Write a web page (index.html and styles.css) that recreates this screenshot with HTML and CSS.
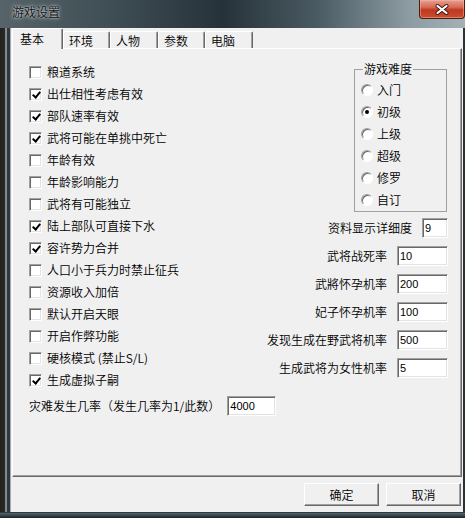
FILE: index.html
```html
<!DOCTYPE html>
<html lang="zh-CN">
<head>
    <meta charset="UTF-8">
    <title>游戏设置</title>
    <link rel="stylesheet" href="styles.css">
</head>
<body>
    <div class="window">
        <div class="title-bar">
            <span class="title">游戏设置</span>
            <button class="close-btn">
                <svg width="14" height="11" viewBox="0 0 14 11">
                    <path d="M2.5 2 L11.5 9 M11.5 2 L2.5 9" stroke="#3b1710" stroke-width="4" stroke-linecap="round"/>
                    <path d="M2.5 2 L11.5 9 M11.5 2 L2.5 9" stroke="#fff" stroke-width="2.2" stroke-linecap="round"/>
                </svg>
            </button>
        </div>

        <div class="frame">
            <div class="left-edge"></div>
            <div class="client">
                <div class="tabs">
                    <div class="tab active">基本</div>
                    <div class="tab">环境</div>
                    <div class="tab wide">人物</div>
                    <div class="tab">参数</div>
                    <div class="tab wide">电脑</div>
                </div>

                <div class="panel">
                    <div class="panel-top">
                        <div class="options">
                            <label class="check"><span class="box"></span>粮道系统</label>
                            <label class="check"><span class="box checked"></span>出仕相性考虑有效</label>
                            <label class="check"><span class="box checked"></span>部队速率有效</label>
                            <label class="check"><span class="box checked"></span>武将可能在单挑中死亡</label>
                            <label class="check"><span class="box"></span>年龄有效</label>
                            <label class="check"><span class="box"></span>年龄影响能力</label>
                            <label class="check"><span class="box"></span>武将有可能独立</label>
                            <label class="check"><span class="box checked"></span>陆上部队可直接下水</label>
                            <label class="check"><span class="box checked"></span>容许势力合并</label>
                            <label class="check"><span class="box"></span>人口小于兵力时禁止征兵</label>
                            <label class="check"><span class="box"></span>资源收入加倍</label>
                            <label class="check"><span class="box"></span>默认开启天眼</label>
                            <label class="check"><span class="box"></span>开启作弊功能</label>
                            <label class="check"><span class="box"></span>硬核模式 (禁止S/L)</label>
                            <label class="check"><span class="box checked"></span>生成虚拟子嗣</label>
                        </div>

                        <div class="side">
                            <fieldset class="group">
                                <legend>游戏难度</legend>
                                <div class="radio"><span class="dot"></span>入门</div>
                                <div class="radio"><span class="dot on"></span>初级</div>
                                <div class="radio"><span class="dot"></span>上级</div>
                                <div class="radio"><span class="dot"></span>超级</div>
                                <div class="radio"><span class="dot"></span>修罗</div>
                                <div class="radio"><span class="dot"></span>自订</div>
                            </fieldset>
                            <div class="field"><span>资料显示详细度</span><input class="num short" value="9"></div>
                            <div class="field"><span>武将战死率</span><input class="num" value="10"></div>
                            <div class="field"><span>武將怀孕机率</span><input class="num" value="200"></div>
                            <div class="field"><span>妃子怀孕机率</span><input class="num" value="100"></div>
                            <div class="field"><span>发现生成在野武将机率</span><input class="num" value="500"></div>
                            <div class="field"><span>生成武将为女性机率</span><input class="num" value="5"></div>
                        </div>
                    </div>

                    <div class="disaster">
                        <span>灾难发生几率（发生几率为1/此数）</span>
                        <input class="num mid" value="4000">
                    </div>
                </div>

                <div class="footer">
                    <button class="btn">确定</button>
                    <button class="btn">取消</button>
                </div>
            </div>
            <div class="right-edge"></div>
        </div>

        <div class="bottom-edge"></div>
    </div>
</body>
</html>
```

FILE: styles.css
```css
:root {
    --face: #f0f0f0;
    --shadow: #a0a0a0;
    --dark: #696969;
    --light: #e3e3e3;
}

* {
    margin: 0;
    padding: 0;
    box-sizing: border-box;
}

body {
    width: 465px;
    height: 518px;
    overflow: hidden;
    background: #1d1f1e;
    font-family: "Noto Sans CJK SC", sans-serif;
    font-size: 12px;
    font-weight: 350;
    color: #000;
}

.window {
    width: 465px;
    height: 518px;
    display: flex;
    flex-direction: column;
    background: linear-gradient(90deg, #56646a 0%, #3e4c53 25%, #263239 48%, #4a5a62 68%, #8d9ca3 88%, #a3b0b6 100%);
}

/* 标题栏 */
.title-bar {
    height: 28px;
    flex-shrink: 0;
    display: flex;
    align-items: flex-start;
}

.title {
    padding: 5px 0 0 12px;
    line-height: 14px;
    color: #101010;
    text-shadow: 0 0 4px rgba(225,232,236,0.9), 0 0 2px rgba(225,232,236,0.8);
}

.close-btn {
    margin-left: auto;
    width: 46px;
    height: 19px;
    border: 1px solid #4a1c12;
    border-top: none;
    border-radius: 0 0 4px 4px;
    background: linear-gradient(#e8a091 0%, #d66a54 40%, #c03820 55%, #c94d30 100%);
    box-shadow: inset 0 0 0 1px rgba(255,190,175,0.45);
    display: flex;
    align-items: center;
    justify-content: center;
}

/* 窗口框架 */
.frame {
    height: 484px;
    flex-shrink: 0;
    display: flex;
}

.left-edge {
    width: 11px;
    background: linear-gradient(90deg, #24221e 0, #2a2824 5px, #7e878a 5px, #848d90 7px, #2d393e 7px, #2d393e 10px, #a4adb1 10px);
}

.right-edge {
    flex: 1;
    background: #26343a;
}

.bottom-edge {
    flex: 1;
    background: linear-gradient(#2f3d43 0, #2f3d43 1px, #56646a 1px, #1b2428 100%);
}

.client {
    width: 452px;
    background: var(--face);
    padding: 0 1px;
    display: flex;
    flex-direction: column;
}

/* 选项卡 */
.tabs {
    height: 20px;
    display: flex;
    align-items: flex-end;
}

.tab {
    width: 47px;
    height: 17px;
    padding: 2px 0 0 5px;
    line-height: 14px;
    border: 1px solid;
    border-color: #fff var(--dark) transparent #fff;
    border-bottom: none;
    border-radius: 2px 2px 0 0;
    box-shadow: inset -1px 0 var(--shadow);
}

.tab.wide {
    width: 48px;
}

.tab.active {
    width: 51px;
    height: 21px;
    margin-bottom: -1px;
    padding: 3px 0 0 7px;
    position: relative;
    z-index: 1;
    background: var(--face);
}

.panel {
    height: 429px;
    border: 1px solid;
    border-color: #fff var(--dark) var(--dark) #fff;
    box-shadow: inset -1px -1px var(--shadow);
    padding: 12px 13px 0 16px;
    display: flex;
    flex-direction: column;
}

.panel-top {
    display: flex;
    justify-content: space-between;
}

/* 复选框 */
.options {
    display: flex;
    flex-direction: column;
}

.check {
    height: 22px;
    display: flex;
    align-items: center;
    gap: 5px;
    line-height: 14px;
    white-space: nowrap;
}

.box {
    width: 13px;
    height: 13px;
    border: 1px solid;
    border-color: var(--shadow) #fff #fff var(--shadow);
    box-shadow: inset 1px 1px var(--dark), inset -1px -1px var(--light);
    background: #fff;
    position: relative;
}

.box.checked::after {
    content: "";
    position: absolute;
    left: 4px;
    top: 1px;
    width: 3px;
    height: 6px;
    border: solid #000;
    border-width: 0 2px 2px 0;
    transform: rotate(40deg);
}

/* 右侧 */
.side {
    display: flex;
    flex-direction: column;
    align-items: flex-end;
}

.group {
    width: 93px;
    margin: 1px 1px 0 0;
    border: 1px solid var(--shadow);
    padding: 3px 0 0 6px;
}

.group legend {
    margin-left: 2px;
    padding: 0 1px;
    line-height: 14px;
}

.radio {
    height: 22px;
    display: flex;
    align-items: center;
    gap: 4px;
    line-height: 14px;
}

.dot {
    width: 12px;
    height: 12px;
    border-radius: 50%;
    border: 1px solid;
    border-color: var(--shadow) #fff #fff var(--shadow);
    box-shadow: inset 1px 1px var(--dark);
    background: #fff;
    position: relative;
}

.dot.on::after {
    content: "";
    position: absolute;
    left: 3px;
    top: 3px;
    width: 4px;
    height: 4px;
    border-radius: 50%;
    background: #000;
}

.field {
    height: 20px;
    margin-top: 8px;
    display: flex;
    align-items: center;
    gap: 10px;
    line-height: 14px;
    white-space: nowrap;
}

.group + .field {
    margin-top: 6px;
}

.num {
    width: 51px;
    height: 20px;
    padding: 0 2px;
    border: 1px solid;
    border-color: var(--shadow) #fff #fff var(--shadow);
    box-shadow: inset 1px 1px var(--dark), inset -1px -1px var(--light);
    background: #fff;
    font-family: "Liberation Sans", sans-serif;
    font-size: 11px;
    color: #000;
    outline: none;
}

.num.short {
    width: 26px;
}

.num.mid {
    width: 49px;
}

.disaster {
    height: 20px;
    margin-top: 5px;
    display: flex;
    align-items: center;
    gap: 7px;
    line-height: 14px;
    white-space: nowrap;
}

/* 底部按钮 */
.footer {
    display: flex;
    justify-content: flex-end;
    gap: 7px;
    padding: 6px 1px 0 0;
}

.btn {
    width: 75px;
    height: 23px;
    background: var(--face);
    border: 1px solid;
    border-color: #fff var(--dark) var(--dark) #fff;
    box-shadow: inset -1px -1px var(--shadow);
    font-family: "Noto Sans CJK SC", sans-serif;
    font-size: 12px;
    font-weight: 350;
    line-height: 14px;
    color: #000;
}
```
